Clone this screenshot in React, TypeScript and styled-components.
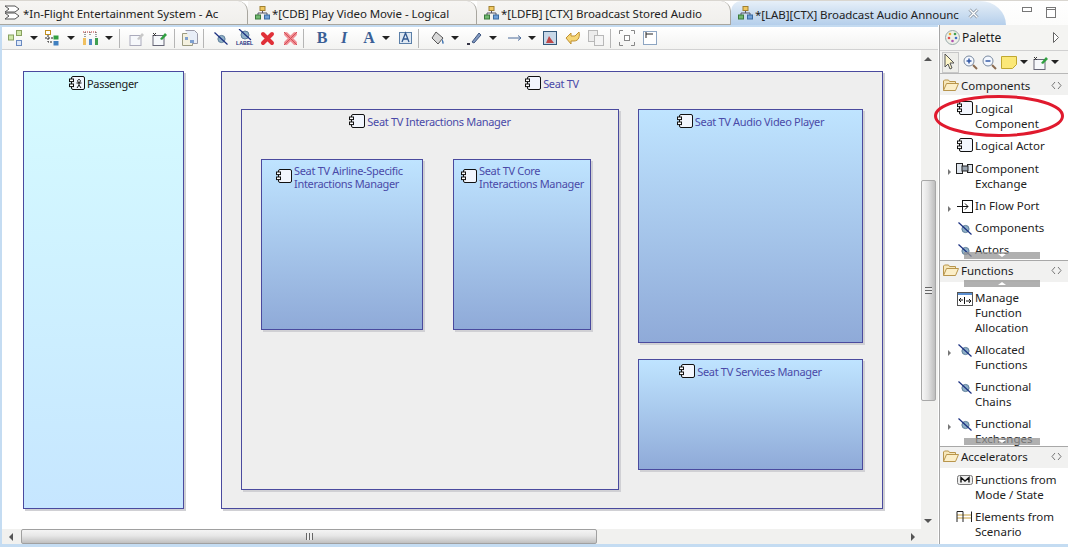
import React from "react";
import styled, { createGlobalStyle } from "styled-components";

const Global = createGlobalStyle`
  html, body { margin: 0; padding: 0; background: #fff; }
  body { font-family: "Noto Sans", "Open Sans", sans-serif; font-size: 11.5px; color: #1c1c1c; }
`;

const Window = styled.div`
  position: relative;
  width: 1068px;
  height: 547px;
  overflow: hidden;
  display: flex;
  flex-direction: column;
  background: #c4dcf2;
`;

/* ---------- tabs ---------- */
const TabBar = styled.div`
  height: 25px;
  flex: none;
  display: flex;
  align-items: flex-end;
  background: linear-gradient(#d9d6d0 0 1px, #ffffff 1px, #fcfcfb 100%);
  position: relative;
`;

const Tab = styled.div<{ $w: number; $active?: boolean; $pad: number }>`
  width: ${(p) => p.$w}px;
  height: 24px;
  flex: none;
  display: flex;
  align-items: center;
  gap: 2px;
  padding-left: ${(p) => p.$pad}px;
  box-sizing: border-box;
  white-space: nowrap;
  font-size: 11.5px;
  letter-spacing: -0.05px;
  color: #222;
  background: ${(p) =>
    p.$active ? "linear-gradient(#e6eff8, #b5cfeb)" : "linear-gradient(#f6f5f3, #f0efec)"};
  border-right: ${(p) => (p.$active ? "none" : "1px solid #a8a69f")};
  border-bottom: ${(p) => (p.$active ? "none" : "1px solid #a8a69f")};
  border-top-right-radius: 10px;
  ${(p) => p.$active && "border-top-left-radius: 10px; border-top-right-radius: 26px 24px;"}
`;

const TabTitle = styled.span`
  margin-top: 2px;
`;

const TabClose = styled.span`
  margin-left: 7px;
  display: flex;
`;

const WinButtons = styled.div`
  margin-left: 16px;
  display: flex;
  align-self: center;
  align-items: flex-start;
  gap: 14px;
`;

/* ---------- main ---------- */
const Main = styled.div`
  flex: 1;
  min-height: 0;
  display: flex;
  margin: 0 0 3px 2px;
  background: #fff;
`;

const Editor = styled.div`
  flex: 1;
  min-width: 0;
  display: flex;
  flex-direction: column;
`;

const Toolbar = styled.div`
  height: 22px;
  flex: none;
  display: flex;
  align-items: center;
  padding-left: 6px;
  background: linear-gradient(#ffffff, #f3f3f1);
  border-top: 2px solid #c4dbf1;
  border-bottom: 1px solid #d2d2d2;
`;

const Tool = styled.span<{ $ml: number }>`
  margin-left: ${(p) => p.$ml}px;
  display: flex;
  flex: none;
`;

const Caret = styled.span<{ $ml: number }>`
  margin-left: ${(p) => p.$ml}px;
  width: 0;
  height: 0;
  flex: none;
  border-left: 4px solid transparent;
  border-right: 4px solid transparent;
  border-top: 4px solid #222;
`;

const Sep = styled.span<{ $ml: number }>`
  margin-left: ${(p) => p.$ml}px;
  width: 1px;
  height: 19px;
  flex: none;
  background: #b5b5b5;
`;

const FontGlyph = styled.span<{ $ml: number; $italic?: boolean }>`
  margin-left: ${(p) => p.$ml}px;
  width: 14px;
  flex: none;
  text-align: center;
  font: ${(p) => (p.$italic ? "italic" : "normal")} bold 16px "Liberation Serif", serif;
  color: #3a5f96;
`;

const CanvasRow = styled.div`
  flex: 1;
  min-height: 0;
  display: flex;
`;

const Canvas = styled.div`
  position: relative;
  flex: 1;
  background: #fff;
  overflow: hidden;
`;

const Node = styled.div<{ $x: number; $y: number; $w: number; $h: number; $kind: "actor" | "part" | "group" }>`
  position: absolute;
  left: ${(p) => p.$x}px;
  top: ${(p) => p.$y}px;
  width: ${(p) => p.$w}px;
  height: ${(p) => p.$h}px;
  box-sizing: border-box;
  border: 1px solid #4a4a9e;
  box-shadow: 2px 2px 0 #d0d0d4;
  background: ${(p) =>
    p.$kind === "group"
      ? "#eeeeee"
      : p.$kind === "actor"
      ? "linear-gradient(#d6fbff, #c6e6ff)"
      : "linear-gradient(#bfe4ff, #8faad8)"};
`;

const NodeLabel = styled.div<{ $pt: number; $pl?: number; $left?: boolean }>`
  display: flex;
  justify-content: ${(p) => (p.$left ? "flex-start" : "center")};
  align-items: ${(p) => (p.$left ? "flex-start" : "center")};
  gap: 2px;
  padding-top: ${(p) => p.$pt}px;
  padding-left: ${(p) => p.$pl ?? 0}px;
  font-size: 11px;
  letter-spacing: -0.32px;
  line-height: 13px;
  white-space: pre;
`;

const NodeIcon = styled.span`
  flex: none;
  display: flex;
  padding-top: 5px;
`;

const NodeText = styled.span<{ $dark?: boolean }>`
  flex: none;
  color: ${(p) => (p.$dark ? "#222" : "#4a4aa8")};
`;

const VScroll = styled.div`
  width: 17px;
  flex: none;
  position: relative;
  background: #f1f1ef;
`;

const VThumb = styled.div`
  position: absolute;
  left: 0;
  top: 130px;
  width: 15px;
  height: 221px;
  box-sizing: border-box;
  border: 1px solid #a8a8a8;
  border-radius: 2px;
  background: linear-gradient(90deg, #f6f6f6, #e4e4e4 45%, #bdbdbd);
  display: flex;
  align-items: center;
  justify-content: center;
`;

const Grip = styled.span<{ $vertical?: boolean }>`
  width: 7px;
  height: 7px;
  background: ${(p) =>
    p.$vertical
      ? "repeating-linear-gradient(90deg, #666 0 1px, #eee 1px 3px)"
      : "repeating-linear-gradient(#666 0 1px, #eee 1px 3px)"};
`;

const Arrow = styled.span<{ $dir: "up" | "down" | "left" | "right"; $at: string }>`
  position: absolute;
  ${(p) => p.$at};
  width: 0;
  height: 0;
  border: 4px solid transparent;
  ${(p) =>
    p.$dir === "up"
      ? "border-bottom-color:#555;border-top-width:0;"
      : p.$dir === "down"
      ? "border-top-color:#555;border-bottom-width:0;"
      : p.$dir === "left"
      ? "border-right-color:#555;border-left-width:0;"
      : "border-left-color:#555;border-right-width:0;"}
`;

const HScroll = styled.div`
  height: 15px;
  flex: none;
  position: relative;
  background: #f1f1ef;
`;

const HThumb = styled.div`
  position: absolute;
  left: 19px;
  top: 0;
  width: 576px;
  height: 15px;
  box-sizing: border-box;
  border: 1px solid #a0a0a0;
  border-radius: 2px;
  background: linear-gradient(#f4f4f4, #e6e6e6 45%, #c0c0c0);
  display: flex;
  align-items: center;
  justify-content: center;
`;

/* ---------- palette ---------- */
const Palette = styled.div`
  width: 128px;
  flex: none;
  display: flex;
  flex-direction: column;
  border-left: 1px solid #a6a6a6;
  margin-left: 1px;
  background: #fff;
  position: relative;
`;

const PaletteHead = styled.div`
  height: 25px;
  flex: none;
  display: flex;
  align-items: center;
  gap: 2px;
  padding: 0 9px 0 5px;
  font-size: 12px;
  background: #f4f4f2;
  border-bottom: 1px solid #d0d0d0;
`;

const Grow = styled.span`
  flex: 1;
`;

const PaletteTools = styled.div`
  height: 22px;
  flex: none;
  display: flex;
  align-items: center;
  padding-left: 2px;
  background: #f4f4f2;
  border-bottom: 1px solid #b8b8b8;
`;

const SelectTool = styled.span`
  width: 15px;
  height: 19px;
  display: flex;
  border: 1px solid #c8c8c8;
  background: #eeeeea;
`;

const Drawer = styled.div<{ $h: number }>`
  height: ${(p) => p.$h}px;
  flex: none;
  position: relative;
  overflow: hidden;
  border-bottom: 1px solid #a8a8a8;
  &:last-child { border-bottom: none; flex: 1; }
`;

const DrawerHead = styled.div<{ $drop?: boolean }>`
  height: 21px;
  display: flex;
  align-items: center;
  gap: 2px;
  padding: ${(p) => (p.$drop ? "2px 6px 0 3px" : "0 6px 2px 3px")};
  box-sizing: border-box;
  font-size: 11.5px;
  background: #f1f1f0;
`;

const Entries = styled.div<{ $pt: number; $gap: number }>`
  display: flex;
  flex-direction: column;
  gap: ${(p) => p.$gap}px;
  padding-top: ${(p) => p.$pt}px;
`;

const Entry = styled.div`
  position: relative;
  display: flex;
  gap: 2px;
  padding-left: 16px;
  font-size: 11.5px;
  line-height: 15px;
  color: #222;
  white-space: pre-line;
`;

const EntryIcon = styled.span<{ $dy?: number }>`
  flex: none;
  width: 17px;
  display: flex;
  justify-content: center;
  align-items: flex-start;
  padding-top: ${(p) => p.$dy ?? 1}px;
`;

const Expand = styled.span`
  position: absolute;
  left: 8px;
  top: 8px;
  width: 0;
  height: 0;
  border: 3px solid transparent;
  border-left: 3px solid #777;
  border-right-width: 0;
`;

const Scroller = styled.div<{ $edge: "top" | "bottom"; $off: number }>`
  position: absolute;
  left: 24px;
  width: 76px;
  height: 7px;
  ${(p) => p.$edge}: ${(p) => p.$off}px;
  background: rgba(150, 150, 150, 0.75);
  display: flex;
  align-items: center;
  justify-content: center;
`;

const ScrollMark = styled.span<{ $up?: boolean }>`
  width: 0;
  height: 0;
  border: 4px solid transparent;
  ${(p) =>
    p.$up
      ? "border-bottom: 3px solid #fff; border-top-width: 0;"
      : "border-top: 3px solid #fff; border-bottom-width: 0;"}
`;

const RedCircle = styled.svg`
  position: absolute;
  left: 933px;
  top: 94px;
  pointer-events: none;
`;

/* ---------- icons ---------- */
const ComponentIcon = ({ actor }: { actor?: boolean }) => (
  <svg width="16" height="14" viewBox="0 0 16 14">
    <rect x="2.5" y="0.5" width="13" height="13" rx="1.5" fill="#f2f6fd" stroke="#111" />
    <rect x="0.5" y="3" width="4" height="2.6" fill="#fff" stroke="#111" />
    <rect x="0.5" y="8" width="4" height="2.6" fill="#fff" stroke="#111" />
    {actor && (
      <path d="M10 3.5a1.4 1.4 0 1 0 .01 0M10 6v3M7.5 7h5M10 9l-2 3M10 9l2 3" fill="none" stroke="#111" />
    )}
  </svg>
);

const HideIcon = () => (
  <svg width="14" height="13" viewBox="0 0 14 13">
    <circle cx="7.5" cy="7" r="3.6" fill="#8fb0c8" stroke="#5f7f9a" />
    <path d="M0.5 0.5L13.5 12.5" stroke="#1a2f80" strokeWidth="1.2" />
  </svg>
);

const FlowPortIcon = () => (
  <svg width="16" height="13" viewBox="0 0 16 13">
    <rect x="5.5" y="0.5" width="10" height="12" fill="#fff" stroke="#111" />
    <path d="M0 6.5h11M8 3.5l3 3-3 3" fill="none" stroke="#111" />
  </svg>
);

const ExchangeIcon = () => (
  <svg width="17" height="11" viewBox="0 0 17 11">
    <rect x="0.5" y="0.5" width="6" height="10" fill="#dfe6ee" stroke="#222" />
    <rect x="11.5" y="1.5" width="5" height="8" fill="#dfe6ee" stroke="#222" />
    <rect x="6" y="3" width="6" height="5" fill="#9aa5b1" stroke="#222" />
  </svg>
);

const AllocationIcon = () => (
  <svg width="16" height="14" viewBox="0 0 16 14">
    <rect x="0.5" y="0.5" width="15" height="13" fill="#fff" stroke="#555" />
    <rect x="1" y="1" width="14" height="2" fill="#5b8fd0" />
    <path d="M2 8h4M2 8l2-2M2 8l2 2M9 9h5M14 9l-2-2M14 9l-2 2M7.5 5v7" fill="none" stroke="#111" />
  </svg>
);

const ModeIcon = () => (
  <svg width="16" height="10" viewBox="0 0 16 10">
    <rect x="0.5" y="0.5" width="15" height="9" rx="2" fill="#eee" stroke="#777" />
    <path d="M4 7.5V2.5l4 3.5 4-3.5v5" fill="none" stroke="#111" strokeWidth="1.4" />
  </svg>
);

const ScenarioIcon = () => (
  <svg width="17" height="11" viewBox="0 0 17 11">
    <path d="M1 4h15M1 7h15" fill="none" stroke="#c8a040" />
    <path d="M1 11V0.5h6M7 0.5V11M15.5 0.5V11" fill="none" stroke="#222" />
  </svg>
);

const FolderIcon = () => (
  <svg width="16" height="13" viewBox="0 0 16 13">
    <path d="M0.5 11.5V2l1-1h4l1 1.5h6v2" fill="#f6e6b8" stroke="#b8954c" />
    <path d="M0.5 11.5l3-7h12l-3 7z" fill="#fbeec8" stroke="#b8954c" />
  </svg>
);

const CollapseIcon = () => (
  <svg width="11" height="9" viewBox="0 0 11 9">
    <path d="M4 1L1 4.5 4 8M7 1l3 3.5L7 8" fill="none" stroke="#777" />
  </svg>
);

const TreeIcon = () => (
  <svg width="15" height="14" viewBox="0 0 15 14">
    <rect x="5" y="0.5" width="5" height="4" fill="#f0c860" stroke="#a08030" />
    <path d="M7.5 5v2M3 9V7h9v2" fill="none" stroke="#556" />
    <rect x="0.5" y="9" width="5" height="4" fill="#70b870" stroke="#3b7a3b" />
    <rect x="9.5" y="9" width="5" height="4" fill="#70a0d8" stroke="#3b6aa0" />
  </svg>
);

const ActivityIcon = () => (
  <svg width="17" height="15" viewBox="0 0 17 15">
    <path d="M1 1h10l4 3-4 3H1l4-3zM1 8h10l4 3-4 3H1l4-3z" fill="#fff" stroke="#555" />
  </svg>
);

const CloseIcon = () => (
  <svg width="11" height="11" viewBox="0 0 11 11">
    <path d="M1.5 1.5l8 8M9.5 1.5l-8 8" stroke="#8a96a4" strokeWidth="3" />
    <path d="M1.5 1.5l8 8M9.5 1.5l-8 8" stroke="#fff" strokeWidth="1.3" />
  </svg>
);

const ArrangeIcon = () => (
  <svg width="16" height="17" viewBox="0 0 16 17">
    <rect x="0.5" y="5" width="5" height="5" fill="#cfe8a8" stroke="#88a060" />
    <rect x="8.5" y="0.5" width="5" height="5" fill="#cfe8a8" stroke="#88a060" />
    <rect x="8.5" y="10.5" width="5" height="5" fill="#dde8f8" stroke="#6a8ac0" />
  </svg>
);

const LayerIcon = () => (
  <svg width="14" height="16" viewBox="0 0 14 16">
    <rect x="0.5" y="0.5" width="5" height="4" fill="#fff" stroke="#c09020" />
    <rect x="8.5" y="5.5" width="5" height="4" fill="#30a040" />
    <rect x="8.5" y="11" width="5" height="4.5" fill="#4080c0" />
    <path d="M3 5v7h5M0 8h8" fill="none" stroke="#222" strokeDasharray="2 1" />
  </svg>
);

const FilterIcon = () => (
  <svg width="16" height="16" viewBox="0 0 16 16">
    <path d="M1 2h14" stroke="#c03030" strokeDasharray="1 1" />
    <path d="M3 2v5M8 2v3M14 2v6" stroke="#444" strokeDasharray="1 1" />
    <rect x="1" y="8" width="3" height="7" fill="#f0c060" />
    <rect x="7" y="9" width="3" height="6" fill="#5088c8" />
    <rect x="13" y="8" width="3" height="7" fill="#40a050" />
  </svg>
);

const PinIcon = ({ faded }: { faded?: boolean }) => (
  <svg width="16" height="15" viewBox="0 0 16 15">
    <rect x="1" y="4.5" width="11" height="10" fill="#f6f8fb" stroke={faded ? "#aab" : "#667"} />
    <path d="M8 8l5-6 2 2-5 5z" fill={faded ? "#c8c8c8" : "#30a040"} />
    {!faded && <path d="M1 2l3 3M4 2L1 5" stroke="#333" />}
  </svg>
);

const CopyIcon = () => (
  <svg width="16" height="16" viewBox="0 0 16 16">
    <path d="M0.5 3.5h10v12H0.5z" fill="#f4f1df" stroke="#9a9a80" />
    <path d="M3.5 0.5h9l3 3v10h-5" fill="#e8eef8" stroke="#9a9aa8" />
    <path d="M3 7h3v3H3zM8 10h4v3H8z" fill="#7fa0d0" />
  </svg>
);

const LabelIcon = () => (
  <svg width="19" height="18" viewBox="0 0 19 18">
    <circle cx="10" cy="6" r="4" fill="#8fb0c8" stroke="#5f7f9a" />
    <path d="M4 0l12 11" stroke="#1a2f80" strokeWidth="1.2" />
    <text x="1" y="16" fontFamily="Liberation Sans" fontSize="5.2" fontWeight="700" fill="#1a2f80">LABEL</text>
  </svg>
);

const DeleteIcon = ({ faded }: { faded?: boolean }) => (
  <svg width="15" height="15" viewBox="0 0 15 15">
    <path d="M3 3l9 9M12 3l-9 9" stroke={faded ? "#f08a90" : "#e03038"} strokeWidth="4" strokeLinecap="round" />
    {faded && <path d="M1 1l13 13M14 1L1 14" stroke="#d05058" strokeWidth="1" />}
  </svg>
);

const FontColorIcon = () => (
  <svg width="13" height="14" viewBox="0 0 13 14">
    <rect x="0.5" y="1.5" width="12" height="11" fill="#dfe8f2" stroke="#5b7fa8" />
    <path d="M3 11l3.5-9 3.5 9M4 8h5" fill="none" stroke="#2f5790" strokeWidth="1.3" />
  </svg>
);

const BucketIcon = () => (
  <svg width="14" height="15" viewBox="0 0 14 15">
    <path d="M5 1l7 6-5 6-6-6z" fill="#d8d8d8" stroke="#555" />
    <path d="M11 8c2 2 2 5 1 5s-1-3-1-5z" fill="#3a70b0" />
  </svg>
);

const PenIcon = () => (
  <svg width="15" height="14" viewBox="0 0 15 14">
    <path d="M5 11L12 2l2 2-7 8z" fill="#8098c0" stroke="#405880" />
    <path d="M0 13h3" stroke="#334" strokeWidth="2" />
  </svg>
);

const LineIcon = () => (
  <svg width="14" height="8" viewBox="0 0 14 8">
    <path d="M0 4h13M10 1.5L13 4l-3 2.5" fill="none" stroke="#4a6a9a" />
  </svg>
);

const PictureIcon = () => (
  <svg width="14" height="14" viewBox="0 0 14 14">
    <rect x="0.5" y="0.5" width="13" height="13" fill="#c8d8e8" stroke="#33587a" />
    <path d="M3 12l3-7 2 3 3 4z" fill="#c04848" />
  </svg>
);

const UndoIcon = () => (
  <svg width="16" height="15" viewBox="0 0 16 15">
    <path d="M1 7l5-5v3h4l4-4c1 4 0 9-5 9H6v3z" fill="#f6d676" stroke="#c09030" />
  </svg>
);

const DupIcon = () => (
  <svg width="16" height="16" viewBox="0 0 16 16">
    <rect x="0.5" y="0.5" width="9" height="11" fill="#ececec" stroke="#b8b8b8" />
    <rect x="6.5" y="5.5" width="9" height="10" fill="#f4f4f4" stroke="#b8b8b8" />
  </svg>
);

const AlignIcon = () => (
  <svg width="16" height="16" viewBox="0 0 16 16">
    <path d="M0.5 4V0.5H4M12 0.5h3.5V4M15.5 12v3.5H12M4 15.5H0.5V12" fill="none" stroke="#888" />
    <rect x="5.5" y="5.5" width="5" height="5" fill="#fff" stroke="#888" />
  </svg>
);

const FitIcon = () => (
  <svg width="14" height="14" viewBox="0 0 14 14">
    <rect x="0.5" y="0.5" width="13" height="13" fill="#fff" stroke="#20508a" strokeDasharray="1 1" />
    <path d="M3 1v6M3 3h7" stroke="#222" />
  </svg>
);

const ColorsIcon = () => (
  <svg width="15" height="15" viewBox="0 0 15 15">
    <circle cx="7.5" cy="7.5" r="7" fill="#eef0e8" stroke="#9aa" />
    <circle cx="5" cy="4" r="1.3" fill="#e8b030" />
    <circle cx="10" cy="4" r="1.3" fill="#40a050" />
    <circle cx="4" cy="8" r="1.3" fill="#e05050" />
    <circle cx="11" cy="8" r="1.3" fill="#4070c8" />
    <circle cx="7.5" cy="11" r="1.3" fill="#b050b0" />
  </svg>
);

const ZoomIcon = ({ minus }: { minus?: boolean }) => (
  <svg width="15" height="15" viewBox="0 0 15 15">
    <circle cx="6" cy="6" r="5" fill="#f4f8ff" stroke="#7a8aa0" />
    <path d="M3.5 6h5" stroke="#2850a0" strokeWidth="1.4" />
    {!minus && <path d="M6 3.5v5" stroke="#2850a0" strokeWidth="1.4" />}
    <path d="M10 10l4 4" stroke="#8a6a50" strokeWidth="2" />
  </svg>
);

const NoteIcon = () => (
  <svg width="16" height="13" viewBox="0 0 16 13">
    <path d="M0.5 0.5h15v8l-4 4h-11z" fill="#fbe878" stroke="#c0a830" />
  </svg>
);

const CursorIcon = () => (
  <svg width="13" height="17" viewBox="0 0 13 17">
    <path d="M2 1v13l3-3 2 5 2-1-2-5h4z" fill="#fdf6c8" stroke="#555" />
  </svg>
);

const nodes = [
  { x: 21, y: 21, w: 161, h: 438, kind: "actor", label: "Passenger", actor: true, pt: 4 },
  { x: 219, y: 21, w: 662, h: 438, kind: "group", label: "Seat TV", pt: 4 },
  { x: 239, y: 59, w: 378, h: 381, kind: "group", label: "Seat TV Interactions Manager", pt: 4 },
  { x: 259, y: 109, w: 162, h: 171, kind: "part", label: "Seat TV Airline-Specific\nInteractions Manager", wrap: 14 },
  { x: 451, y: 109, w: 138, h: 171, kind: "part", label: "Seat TV Core\nInteractions Manager", wrap: 7 },
  { x: 636, y: 59, w: 225, h: 234, kind: "part", label: "Seat TV Audio Video Player", pt: 4 },
  { x: 636, y: 309, w: 225, h: 111, kind: "part", label: "Seat TV Services Manager", pt: 4 },
] as const;

export default function App() {
  return (
    <Window>
      <Global />
      <TabBar>
        <Tab $w={248} $pad={4}><ActivityIcon /><TabTitle>*In-Flight Entertainment System - Ac</TabTitle></Tab>
        <Tab $w={229} $pad={7}><TreeIcon /><TabTitle>*[CDB] Play Video Movie - Logical</TabTitle></Tab>
        <Tab $w={254} $pad={7}><TreeIcon /><TabTitle>*[LDFB] [CTX] Broadcast Stored Audio</TabTitle></Tab>
        <Tab $w={275} $pad={7} $active>
          <TreeIcon />
          <TabTitle>*[LAB][CTX] Broadcast Audio Announc</TabTitle>
          <TabClose><CloseIcon /></TabClose>
        </Tab>
        <WinButtons>
          <svg width="10" height="6" viewBox="0 0 10 6"><rect x="0.5" y="0.5" width="9" height="4" fill="#fff" stroke="#777" /></svg>
          <svg width="10" height="11" viewBox="0 0 10 11"><rect x="0.5" y="0.5" width="9" height="10" fill="#fff" stroke="#777" /><path d="M0 2.5h10" stroke="#777" /></svg>
        </WinButtons>
      </TabBar>
      <Main>
        <Editor>
          <Toolbar>
            <Tool $ml={0}><ArrangeIcon /></Tool>
            <Caret $ml={6} />
            <Tool $ml={7}><LayerIcon /></Tool>
            <Caret $ml={8} />
            <Tool $ml={7}><FilterIcon /></Tool>
            <Caret $ml={7} />
            <Sep $ml={6} />
            <Tool $ml={9}><PinIcon faded /></Tool>
            <Tool $ml={7}><PinIcon /></Tool>
            <Sep $ml={6} />
            <Tool $ml={7}><CopyIcon /></Tool>
            <Sep $ml={5} />
            <Tool $ml={10}><HideIcon /></Tool>
            <Tool $ml={7}><LabelIcon /></Tool>
            <Tool $ml={6}><DeleteIcon /></Tool>
            <Tool $ml={8}><DeleteIcon faded /></Tool>
            <Sep $ml={5} />
            <FontGlyph $ml={11}>B</FontGlyph>
            <FontGlyph $ml={8} $italic>I</FontGlyph>
            <FontGlyph $ml={11}>A</FontGlyph>
            <Caret $ml={6} />
            <Tool $ml={9}><FontColorIcon /></Tool>
            <Sep $ml={6} />
            <Tool $ml={12}><BucketIcon /></Tool>
            <Caret $ml={6} />
            <Tool $ml={8}><PenIcon /></Tool>
            <Caret $ml={7} />
            <Tool $ml={11}><LineIcon /></Tool>
            <Caret $ml={6} />
            <Tool $ml={7}><PictureIcon /></Tool>
            <Tool $ml={8}><UndoIcon /></Tool>
            <Tool $ml={7}><DupIcon /></Tool>
            <Sep $ml={6} />
            <Tool $ml={8}><AlignIcon /></Tool>
            <Tool $ml={8}><FitIcon /></Tool>
          </Toolbar>
          <CanvasRow>
            <Canvas>
              {nodes.map((n) => (
                <Node key={n.label} $x={n.x} $y={n.y} $w={n.w} $h={n.h} $kind={n.kind}>
                  {"wrap" in n ? (
                    <NodeLabel $pt={4} $pl={n.wrap} $left>
                      <NodeIcon><ComponentIcon /></NodeIcon>
                      <NodeText>{n.label}</NodeText>
                    </NodeLabel>
                  ) : (
                    <NodeLabel $pt={n.pt}>
                      <ComponentIcon actor={"actor" in n} />
                      <NodeText $dark={"actor" in n}>{n.label}</NodeText>
                    </NodeLabel>
                  )}
                </Node>
              ))}
            </Canvas>
            <VScroll>
              <Arrow $dir="up" $at="left: 3px; top: 7px;" />
              <VThumb><Grip /></VThumb>
              <Arrow $dir="down" $at="left: 3px; top: 469px;" />
            </VScroll>
          </CanvasRow>
          <HScroll>
            <Arrow $dir="left" $at="left: 7px; top: 4px;" />
            <HThumb><Grip $vertical /></HThumb>
            <Arrow $dir="right" $at="left: 909px; top: 4px;" />
          </HScroll>
        </Editor>
        <Palette>
          <PaletteHead>
            <ColorsIcon />
            <span>Palette</span>
            <Grow />
            <svg width="6" height="11" viewBox="0 0 6 11"><path d="M0.5 0.5l5 5-5 5z" fill="#fff" stroke="#666" /></svg>
          </PaletteHead>
          <PaletteTools>
            <SelectTool><CursorIcon /></SelectTool>
            <Tool $ml={4}><ZoomIcon /></Tool>
            <Tool $ml={4}><ZoomIcon minus /></Tool>
            <Tool $ml={4}><NoteIcon /></Tool>
            <Caret $ml={3} />
            <Tool $ml={5}><PinIcon /></Tool>
            <Caret $ml={2} />
          </PaletteTools>
          <Drawer $h={186}>
            <DrawerHead $drop><FolderIcon /><span>Components</span><Grow /><CollapseIcon /></DrawerHead>
            <Entries $pt={6} $gap={7.3}>
              <Entry><EntryIcon $dy={0}><ComponentIcon /></EntryIcon>{"Logical\nComponent"}</Entry>
              <Entry><EntryIcon $dy={0}><ComponentIcon /></EntryIcon>Logical Actor</Entry>
              <Entry><Expand /><EntryIcon $dy={2}><ExchangeIcon /></EntryIcon>{"Component\nExchange"}</Entry>
              <Entry><Expand /><EntryIcon $dy={2}><FlowPortIcon /></EntryIcon>In Flow Port</Entry>
              <Entry><EntryIcon $dy={2}><HideIcon /></EntryIcon>Components</Entry>
              <Entry><EntryIcon $dy={2}><HideIcon /></EntryIcon>Actors</Entry>
            </Entries>
            <Scroller $edge="bottom" $off={1}><ScrollMark /></Scroller>
          </Drawer>
          <Drawer $h={185}>
            <DrawerHead><FolderIcon /><span>Functions</span><Grow /><CollapseIcon /></DrawerHead>
            <Entries $pt={8} $gap={7}>
              <Entry><EntryIcon $dy={2}><AllocationIcon /></EntryIcon>{"Manage\nFunction\nAllocation"}</Entry>
              <Entry><Expand /><EntryIcon $dy={2}><HideIcon /></EntryIcon>{"Allocated\nFunctions"}</Entry>
              <Entry><EntryIcon $dy={2}><HideIcon /></EntryIcon>{"Functional\nChains"}</Entry>
              <Entry><Expand /><EntryIcon $dy={2}><HideIcon /></EntryIcon>{"Functional\nExchanges"}</Entry>
            </Entries>
            <Scroller $edge="top" $off={19}><ScrollMark $up /></Scroller>
            <Scroller $edge="bottom" $off={1}><ScrollMark /></Scroller>
          </Drawer>
          <Drawer $h={100}>
            <DrawerHead><FolderIcon /><span>Accelerators</span><Grow /><CollapseIcon /></DrawerHead>
            <Entries $pt={4} $gap={7}>
              <Entry><EntryIcon $dy={3}><ModeIcon /></EntryIcon>{"Functions from\nMode / State"}</Entry>
              <Entry><EntryIcon $dy={2}><ScenarioIcon /></EntryIcon>{"Elements from\nScenario"}</Entry>
            </Entries>
          </Drawer>
        </Palette>
      </Main>
      <RedCircle width="134" height="44" viewBox="0 0 134 44">
        <ellipse cx="66" cy="22" rx="63.5" ry="19.5" fill="none" stroke="#e01a2e" strokeWidth="3" />
      </RedCircle>
    </Window>
  );
}
